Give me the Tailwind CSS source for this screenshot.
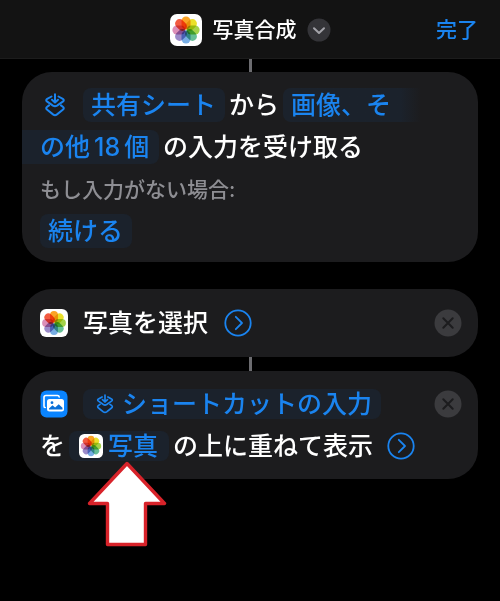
<!DOCTYPE html>
<html lang="ja">
<head>
  <meta charset="UTF-8" />
  <title>写真合成</title>
  <meta name="viewport" content="width=device-width, initial-scale=1.0" />
  <script src="https://cdn.jsdelivr.net/npm/@tailwindcss/browser@4"></script>
</head>
<body class="bg-black text-white min-h-screen font-medium font-['Inter','Noto_Sans_CJK_JP',sans-serif]">

  <!-- Shared icons -->
  <svg class="hidden">
    <symbol id="photos" viewBox="0 0 32 32">
      <rect width="32" height="32" rx="7" fill="#fff" />
      <g style="isolation:isolate">
        <g class="mix-blend-multiply"><rect x="11.5" y="2.4" width="9" height="13" rx="4.5" fill="#fba325" /></g>
        <g class="mix-blend-multiply" transform="rotate(45 16 16)"><rect x="11.5" y="2.4" width="9" height="13" rx="4.5" fill="#ebe02a" /></g>
        <g class="mix-blend-multiply" transform="rotate(90 16 16)"><rect x="11.5" y="2.4" width="9" height="13" rx="4.5" fill="#a4d24a" /></g>
        <g class="mix-blend-multiply" transform="rotate(135 16 16)"><rect x="11.5" y="2.4" width="9" height="13" rx="4.5" fill="#66bf96" /></g>
        <g class="mix-blend-multiply" transform="rotate(180 16 16)"><rect x="11.5" y="2.4" width="9" height="13" rx="4.5" fill="#78aee4" /></g>
        <g class="mix-blend-multiply" transform="rotate(225 16 16)"><rect x="11.5" y="2.4" width="9" height="13" rx="4.5" fill="#9b8bc9" /></g>
        <g class="mix-blend-multiply" transform="rotate(270 16 16)"><rect x="11.5" y="2.4" width="9" height="13" rx="4.5" fill="#dc8fb8" /></g>
        <g class="mix-blend-multiply" transform="rotate(315 16 16)"><rect x="11.5" y="2.4" width="9" height="13" rx="4.5" fill="#f25a40" /></g>
      </g>
    </symbol>
    <symbol id="input" viewBox="0 0 20 24">
      <g fill="none" stroke="#1a84f0" stroke-width="2" stroke-linecap="round" stroke-linejoin="round">
        <path d="M6.500 3.500 2.200 5.900Q.2 7.200 2.200 8.600L8 12.600Q10 13.900 12 12.600L17.800 8.600Q19.800 7.200 17.800 5.900L13.500 3.500" />
        <path d="M10 1.200v8.300M7 6.700 10 9.600l3-2.900" />
        <path d="M4 12.400 2.200 13.700Q.2 15.200 2.200 16.800L8 21.400Q10 22.900 12 21.400L17.800 16.800Q19.800 15.200 17.800 13.700L16 12.400" />
      </g>
    </symbol>
    <symbol id="expand" viewBox="0 0 28 28">
      <g fill="none" stroke="#1a84f0" stroke-width="1.8" stroke-linecap="round" stroke-linejoin="round">
        <circle cx="14" cy="14" r="12.700" />
        <path d="M11.800 7.800 18 14l-6.200 6.200" />
      </g>
    </symbol>
    <symbol id="close" viewBox="0 0 28 28">
      <circle cx="14" cy="14" r="13.500" fill="#3b3b3e" />
      <path d="m9.300 9.300 9.400 9.400m0-9.400-9.400 9.400" fill="none" stroke="#1c1c1e" stroke-width="2" stroke-linecap="round" />
    </symbol>
  </svg>

  <!-- Header -->
  <header class="grid grid-cols-[1fr_auto_1fr] items-center h-[59px] pt-px px-[22px] bg-[#131313] border-b border-[#1c1c1c] text-[21px]">
    <button class="col-start-2 flex items-center">
      <svg class="w-8 h-8"><use href="#photos" /></svg>
      <h1 class="ml-[11px] font-medium">写真合成</h1>
      <svg class="ml-[10px] w-6 h-6" viewBox="0 0 24 24">
        <circle cx="12" cy="12" r="11.500" fill="#343438" />
        <path d="m7 10.200 5 4.800 5-4.800" fill="none" stroke="#a2a2a8" stroke-width="2" stroke-linecap="round" stroke-linejoin="round" />
      </svg>
    </button>
    <button class="justify-self-end text-[#1a84f0]">完了</button>
  </header>

  <main class="px-[22px] text-[25px] leading-[34px] whitespace-nowrap">
    <div class="mx-auto w-[3px] h-[13px] bg-[#6c6c70]"></div>

    <!-- Input -->
    <section class="rounded-[30px] bg-[#1c1c1e] pt-4 pb-[14px]">
      <div class="flex items-center pl-[23px]">
        <svg class="w-5 h-6"><use href="#input" /></svg>
        <button class="ml-[18px] px-2 w-[142px] text-left rounded-lg bg-[#1b222c] text-[#1a84f0]">共有シート</button>
        <span class="ml-1">から</span>
        <button class="ml-1 px-2 w-[138px] text-left rounded-l-lg bg-linear-to-r from-[#1b222c] from-85% to-[#1c1c1e] text-[#1a84f0]">画像、そ</button>
      </div>
      <div class="flex items-center mt-2">
        <button class="pl-[18px] w-[137px] text-left rounded-r-lg bg-[#1b222c] text-[#1a84f0]">の他<span class="mx-1">18</span>個</button>
        <span class="ml-1">の入力を受け取る</span>
      </div>
      <p class="mt-[9px] pl-[18px] text-[21px] text-[#8e8e93]">もし入力がない場合:</p>
      <button class="block mt-[7px] ml-[18px] px-2 w-[92px] text-left rounded-lg bg-[#1b222c] text-[#1a84f0]">続ける</button>
    </section>

    <!-- Select photos -->
    <section class="flex items-center mt-[27px] h-[68px] pl-[18px] pr-4 rounded-[30px] bg-[#1c1c1e]">
      <svg class="w-7 h-7"><use href="#photos" /></svg>
      <h2 class="ml-[15px]">写真を選択</h2>
      <button class="ml-4" aria-label="詳細"><svg class="w-7 h-7"><use href="#expand" /></svg></button>
      <button class="ml-auto" aria-label="削除"><svg class="w-7 h-7"><use href="#close" /></svg></button>
    </section>

    <div class="mx-auto w-[3px] h-[14px] bg-[#6c6c70]"></div>

    <!-- Overlay image -->
    <section class="rounded-[30px] bg-[#1c1c1e] pt-[18px] pb-[18px] pl-[18px] pr-4 leading-[30px]">
      <div class="flex items-center">
        <svg class="w-7 h-7" viewBox="0 0 28 28">
          <rect width="27" height="27" x=".5" y=".5" rx="6" fill="#0a84ff" />
          <path d="M5.200 17.500h-.2Q4 17.500 4 16V7.500Q4 5.500 6 5.500h11.500Q19 5.500 19.200 7" fill="none" stroke="#fff" stroke-width="1.600" stroke-linecap="round" />
          <rect x="7" y="9" width="17" height="12.500" rx="2.500" fill="#fff" />
          <path d="M9 19.500v-1l3.500-3.200 2.600 2.300 3.600-3.400 3.800 3.600v1.700Z" fill="#0a70d8" />
          <circle cx="12" cy="12.700" r="1.400" fill="#0a70d8" />
        </svg>
        <button class="flex items-center ml-[15px] pl-[13px] w-[298px] rounded-lg bg-[#1b222c] text-[#1a84f0]">
          <svg class="w-[18px] h-5"><use href="#input" /></svg>
          <span class="ml-2">ショートカットの入力</span>
        </button>
        <button class="ml-auto" aria-label="削除"><svg class="w-7 h-7"><use href="#close" /></svg></button>
      </div>
      <div class="flex items-center mt-3">
        <span>を</span>
        <span class="relative ml-1">
          <button class="flex items-center pl-[10px] w-[100px] rounded-lg bg-[#1b222c] text-[#1a84f0]">
            <svg class="w-6 h-6"><use href="#photos" /></svg>
            <span class="ml-[5px]">写真</span>
          </button>
          <!-- Pointer to the photo variable -->
          <svg class="absolute top-[30px] left-[18px] w-20 h-[86px]" viewBox="0 0 80 86">
            <path d="M40 2.500 77.500 42.500H58.500V83.500H20.500V42.500H2.500Z" fill="#fff" stroke="#d8232a" stroke-width="3.400" stroke-linejoin="round" />
          </svg>
        </span>
        <span class="ml-1">の上に重ねて表示</span>
        <button class="ml-[14px]" aria-label="詳細"><svg class="w-7 h-7"><use href="#expand" /></svg></button>
      </div>
    </section>
  </main>

</body>
</html>
